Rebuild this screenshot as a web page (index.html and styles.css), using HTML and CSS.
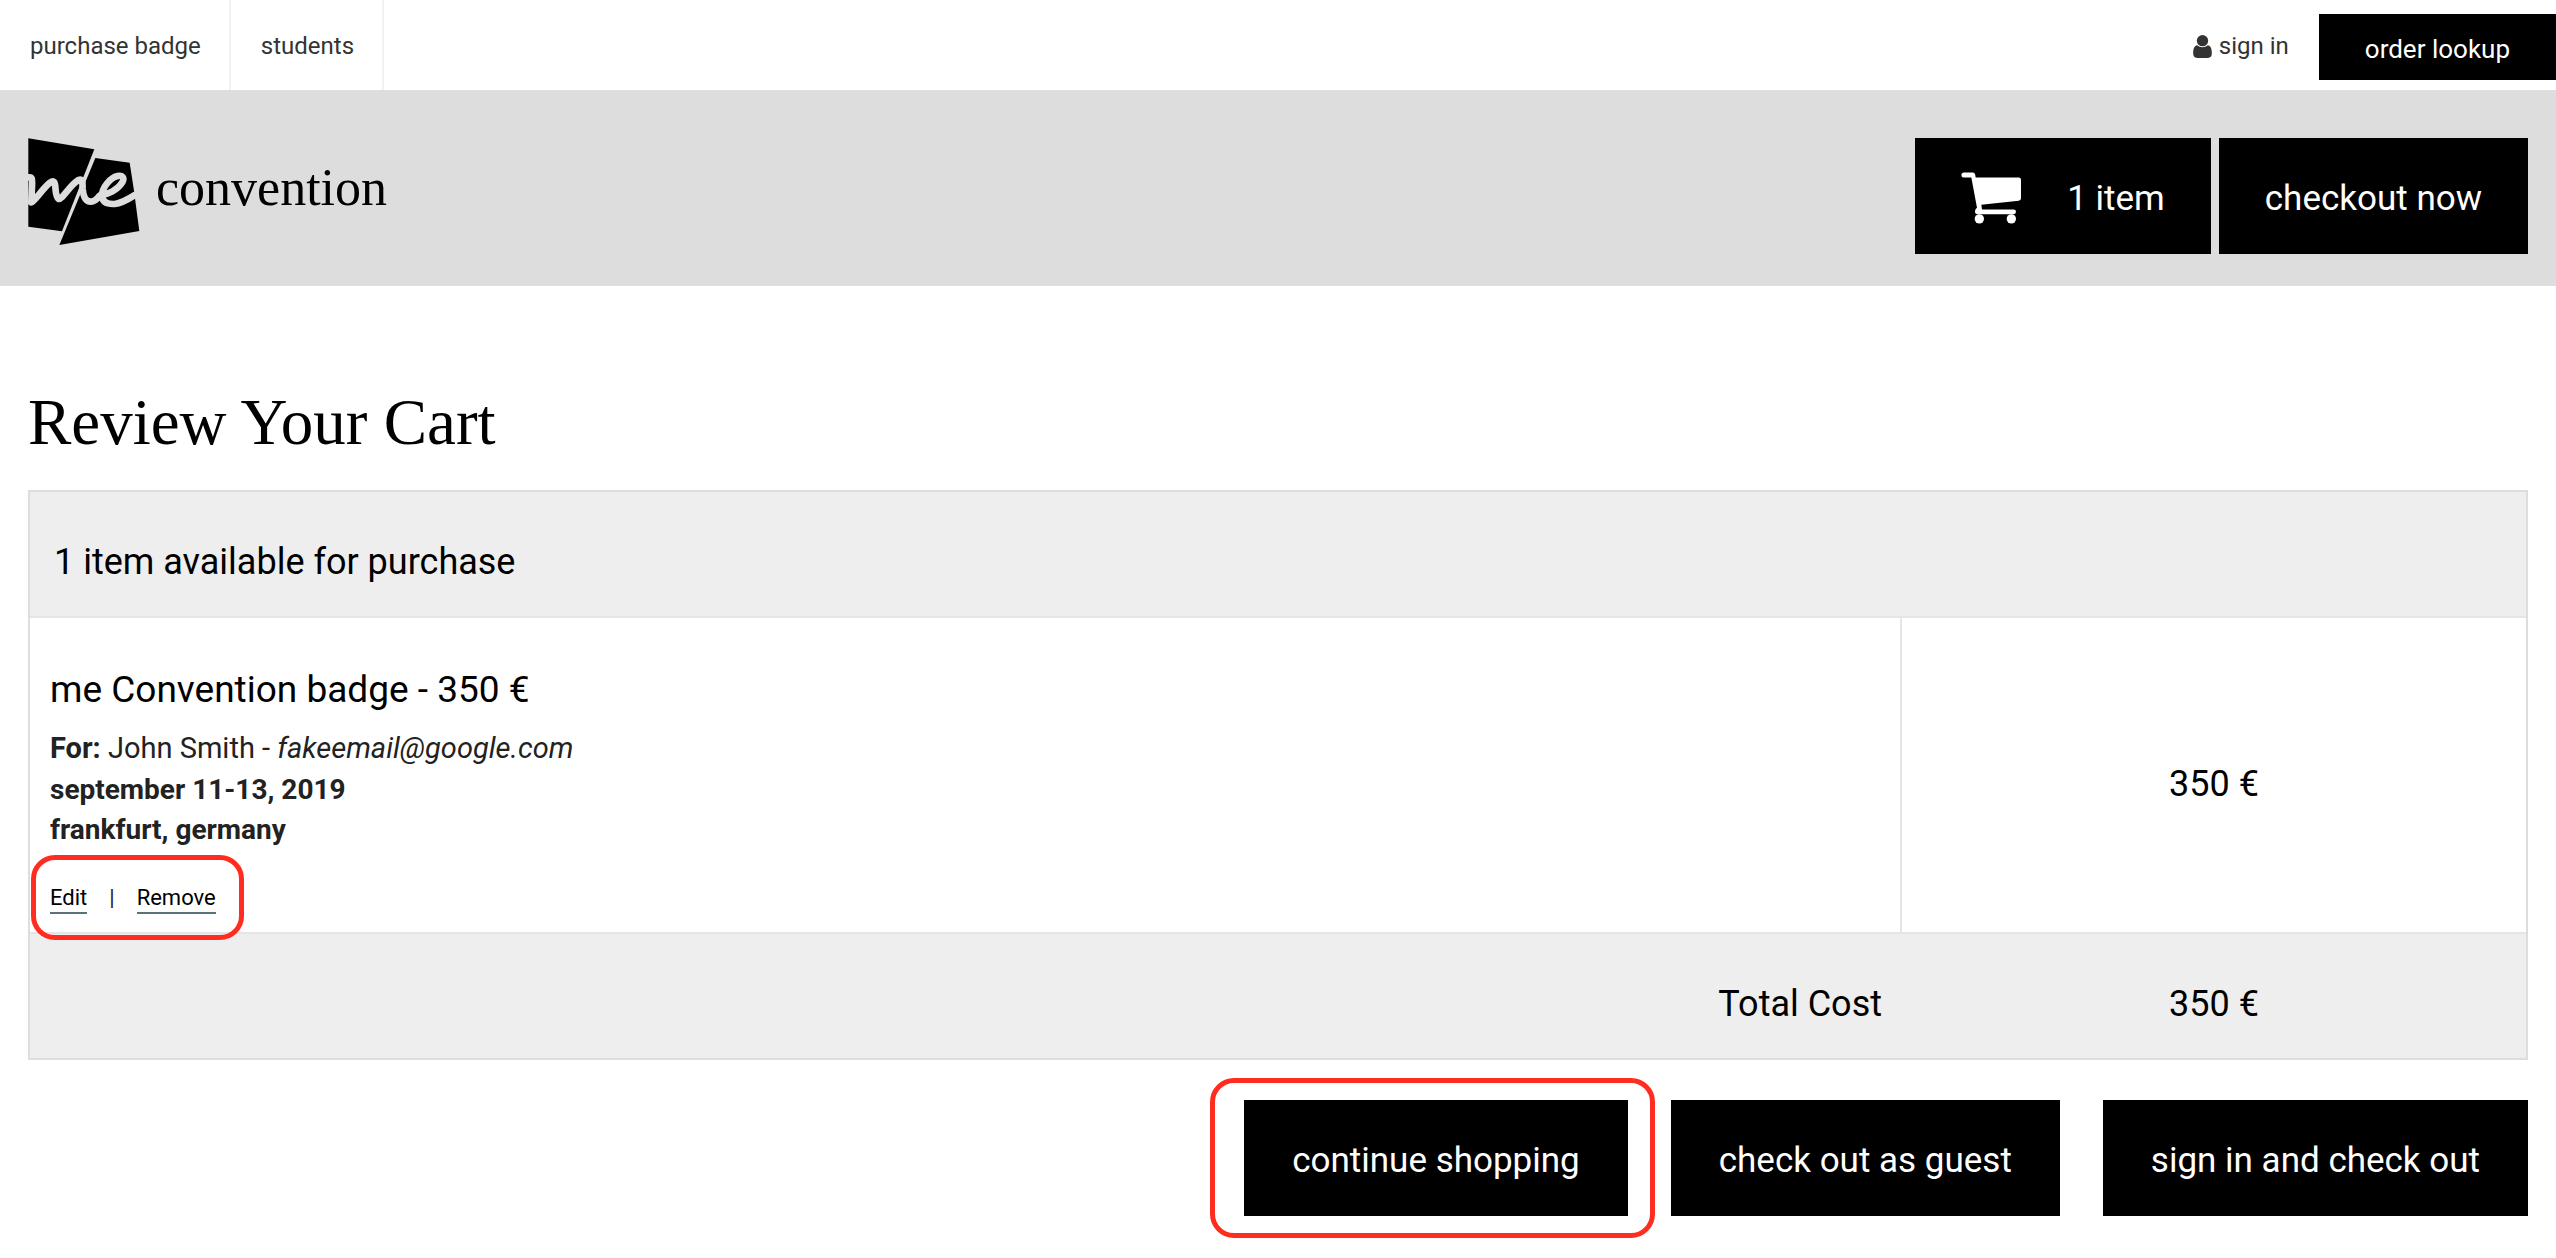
FILE: index.html
```html
<!DOCTYPE html>
<html lang="en">
<head>
<meta charset="utf-8">
<meta name="viewport" content="width=device-width, initial-scale=1">
<title>Review Your Cart - me Convention</title>
<link rel="stylesheet" href="styles.css">
</head>
<body>
<nav class="topbar" aria-label="Main">
  <a class="topbar-link" href="#badge">purchase badge</a>
  <a class="topbar-link" href="#students">students</a>
  <a class="sign-in" href="#signin">
    <svg class="user-icon" viewBox="0 0 56 69" aria-hidden="true"><circle cx="28" cy="17" r="17"/><path d="M12 31C4 32 0 41 0 55C0 64 4 69 12 69H44C52 69 56 64 56 55C56 41 52 32 44 31C35 39 21 39 12 31Z"/></svg>
    sign in
  </a>
  <a class="order-lookup" href="#lookup">order lookup</a>
</nav>

<header class="header">
  <a class="brand" href="#home">
    <svg class="brand-mark" viewBox="24 39 336 324" aria-hidden="true">
      <path d="M25 40L223 73L126 319L25 305Z"/>
      <path d="M226 99L329 113L343 203L344 213L358 318L118 360Z"/>
      <path class="brand-script" d="M22 158C38 153 37 163 36 184L34 232C48 224 66 193 90 173C102 164 105 172 106 186C107 202 110 218 116 222C128 222 150 180 174 166C190 158 187 174 188 192C190 214 196 230 212 230C224 230 232 222 240 211C262 209 292 196 307 172C315 157 306 150 293 153C270 158 246 188 246 212C247 231 262 238 284 237C306 235 326 222 348 208"/>
    </svg>
    <span class="brand-name">convention</span>
  </a>
  <div class="header-actions">
    <button class="btn btn-cart" type="button">
      <svg class="cart-icon" viewBox="240 214 180 155" aria-hidden="true">
        <path d="M248 215H275Q282 215 283 224L284 230H413Q420 230 420 237V292Q420 299 413 300L301 312L303 326H398Q405 326 405 333Q405 340 398 340H290Q282 340 282 332Q282 325 288 321L271 230H248Q241 230 241 222.500Q241 215 248 215Z"/>
        <circle cx="295" cy="354" r="14"/><circle cx="391" cy="354" r="14"/>
      </svg>
      1 item
    </button>
    <button class="btn" type="button">checkout now</button>
  </div>
</header>

<main class="main">
  <h1 class="title">Review Your Cart</h1>
  <table class="cart">
    <colgroup>
      <col class="col-item">
      <col>
    </colgroup>
    <thead>
      <tr><th class="cart-head" colspan="2" scope="colgroup">1 item available for purchase</th></tr>
    </thead>
    <tbody>
      <tr>
        <td class="cart-item">
          <h2 class="item-name">me Convention badge - 350 €</h2>
          <p class="item-for"><strong>For:</strong> John Smith - <em>fakeemail@google.com</em></p>
          <p class="item-meta">september 11-13, 2019</p>
          <p class="item-meta">frankfurt, germany</p>
          <div class="item-links highlight">
            <a class="item-link" href="#edit">Edit</a>
            <span>|</span>
            <a class="item-link" href="#remove">Remove</a>
          </div>
        </td>
        <td class="cart-price">350 €</td>
      </tr>
    </tbody>
    <tfoot>
      <tr>
        <th class="total-label" scope="row">Total Cost</th>
        <td class="total-price">350 €</td>
      </tr>
    </tfoot>
  </table>
  <div class="actions">
    <div class="action-main highlight"><button class="btn" type="button">continue shopping</button></div>
    <button class="btn" type="button">check out as guest</button>
    <button class="btn" type="button">sign in and check out</button>
  </div>
</main>
</body>
</html>
```
FILE: styles.css
```css
* { box-sizing: border-box; }

body {
  margin: 0;
  background: #fff;
  color: #222;
  font-family: Roboto, "Liberation Sans", sans-serif;
}

a { color: inherit; text-decoration: none; }
h1, h2, p { margin: 0; font-weight: 400; }

/* Top navigation */
.topbar {
  display: flex;
  align-items: stretch;
  height: 90px;
  color: #333;
  font-size: 24px;
}
.topbar-link {
  display: flex;
  align-items: center;
  padding: 2px 28px 0 30px;
  border-right: 2px solid #f1f1f1;
}
.sign-in {
  display: flex;
  align-items: center;
  gap: 7px;
  margin-left: auto;
  padding: 2px 30px 0 0;
}
.user-icon { width: 19px; height: 23px; fill: currentColor; }
.order-lookup {
  display: flex;
  align-items: center;
  margin: 14px 0 10px;
  padding: 4px 46px 0;
  background: #000;
  color: #fff;
  font-size: 26px;
}

/* Brand header */
.header {
  display: flex;
  justify-content: space-between;
  align-items: flex-start;
  padding: 48px 28px 32px;
  background: #ddd;
}
.brand {
  display: flex;
  align-items: center;
  gap: 16px;
  color: #000;
}
.brand-mark { width: 112px; height: 108px; }
.brand-script {
  fill: none;
  stroke: #ddd;
  stroke-width: 20;
  stroke-linejoin: round;
}
.brand-name {
  padding-bottom: 8px;
  font-family: "Liberation Serif", serif;
  font-size: 52px;
  line-height: 60px;
}
.header-actions { display: flex; gap: 8px; }

.btn {
  height: 116px;
  padding: 4px 48px 0;
  border: 0;
  background: #000;
  color: #fff;
  font-family: inherit;
  font-size: 35px;
  white-space: nowrap;
  cursor: pointer;
}
.header-actions .btn { padding: 4px 46px 0; }
.btn-cart { display: flex; align-items: center; gap: 46px; }
.cart-icon { width: 60px; height: 52px; fill: #fff; }

/* Cart */
.main { padding: 96px 28px 42px; }
.title {
  margin-bottom: 28px;
  color: #000;
  font-family: "Liberation Serif", serif;
  font-size: 65px;
  line-height: 80px;
}
.cart {
  width: 100%;
  border: 2px solid #ddd;
  border-spacing: 0;
  table-layout: fixed;
  color: #000;
  font-size: 36px;
  line-height: 44px;
}
.col-item { width: 75%; }
.cart th { font-weight: 400; }
.cart-head {
  padding: 48px 24px 32px;
  border-bottom: 2px solid #e5e5e5;
  background: #eee;
  text-align: left;
}
.cart-item {
  padding: 50px 20px 18px;
  border-right: 2px solid #e5e5e5;
  border-bottom: 2px solid #e5e5e5;
  color: #222;
}
.cart-price {
  padding: 18px 20px 0;
  border-bottom: 2px solid #e5e5e5;
  text-align: center;
}
.item-name { color: #000; font-size: 37px; line-height: 44px; }
.item-for { margin-top: 14px; font-size: 29px; line-height: 44px; }
.item-meta { font-size: 28px; font-weight: 700; line-height: 40px; }
.item-links {
  display: flex;
  gap: 22px;
  width: max-content;
  margin-top: 34px;
  font-size: 22px;
  line-height: 28px;
}
.item-link { border-bottom: 2px solid #5d7179; color: #000; }
.total-label, .total-price { padding: 48px 20px 32px; background: #eee; }
.total-label { text-align: right; }
.total-price { text-align: center; }

/* Checkout actions */
.actions {
  display: flex;
  justify-content: flex-end;
  gap: 43px;
  margin-top: 40px;
}

/* Red callout ring */
.highlight { position: relative; }
.highlight::after {
  content: "";
  position: absolute;
  inset: -29px -28px -26px -19px;
  border: 5px solid #ff2d1f;
  border-radius: 24px;
  pointer-events: none;
}
.action-main::after { inset: -22px -27px -22px -34px; }
```
